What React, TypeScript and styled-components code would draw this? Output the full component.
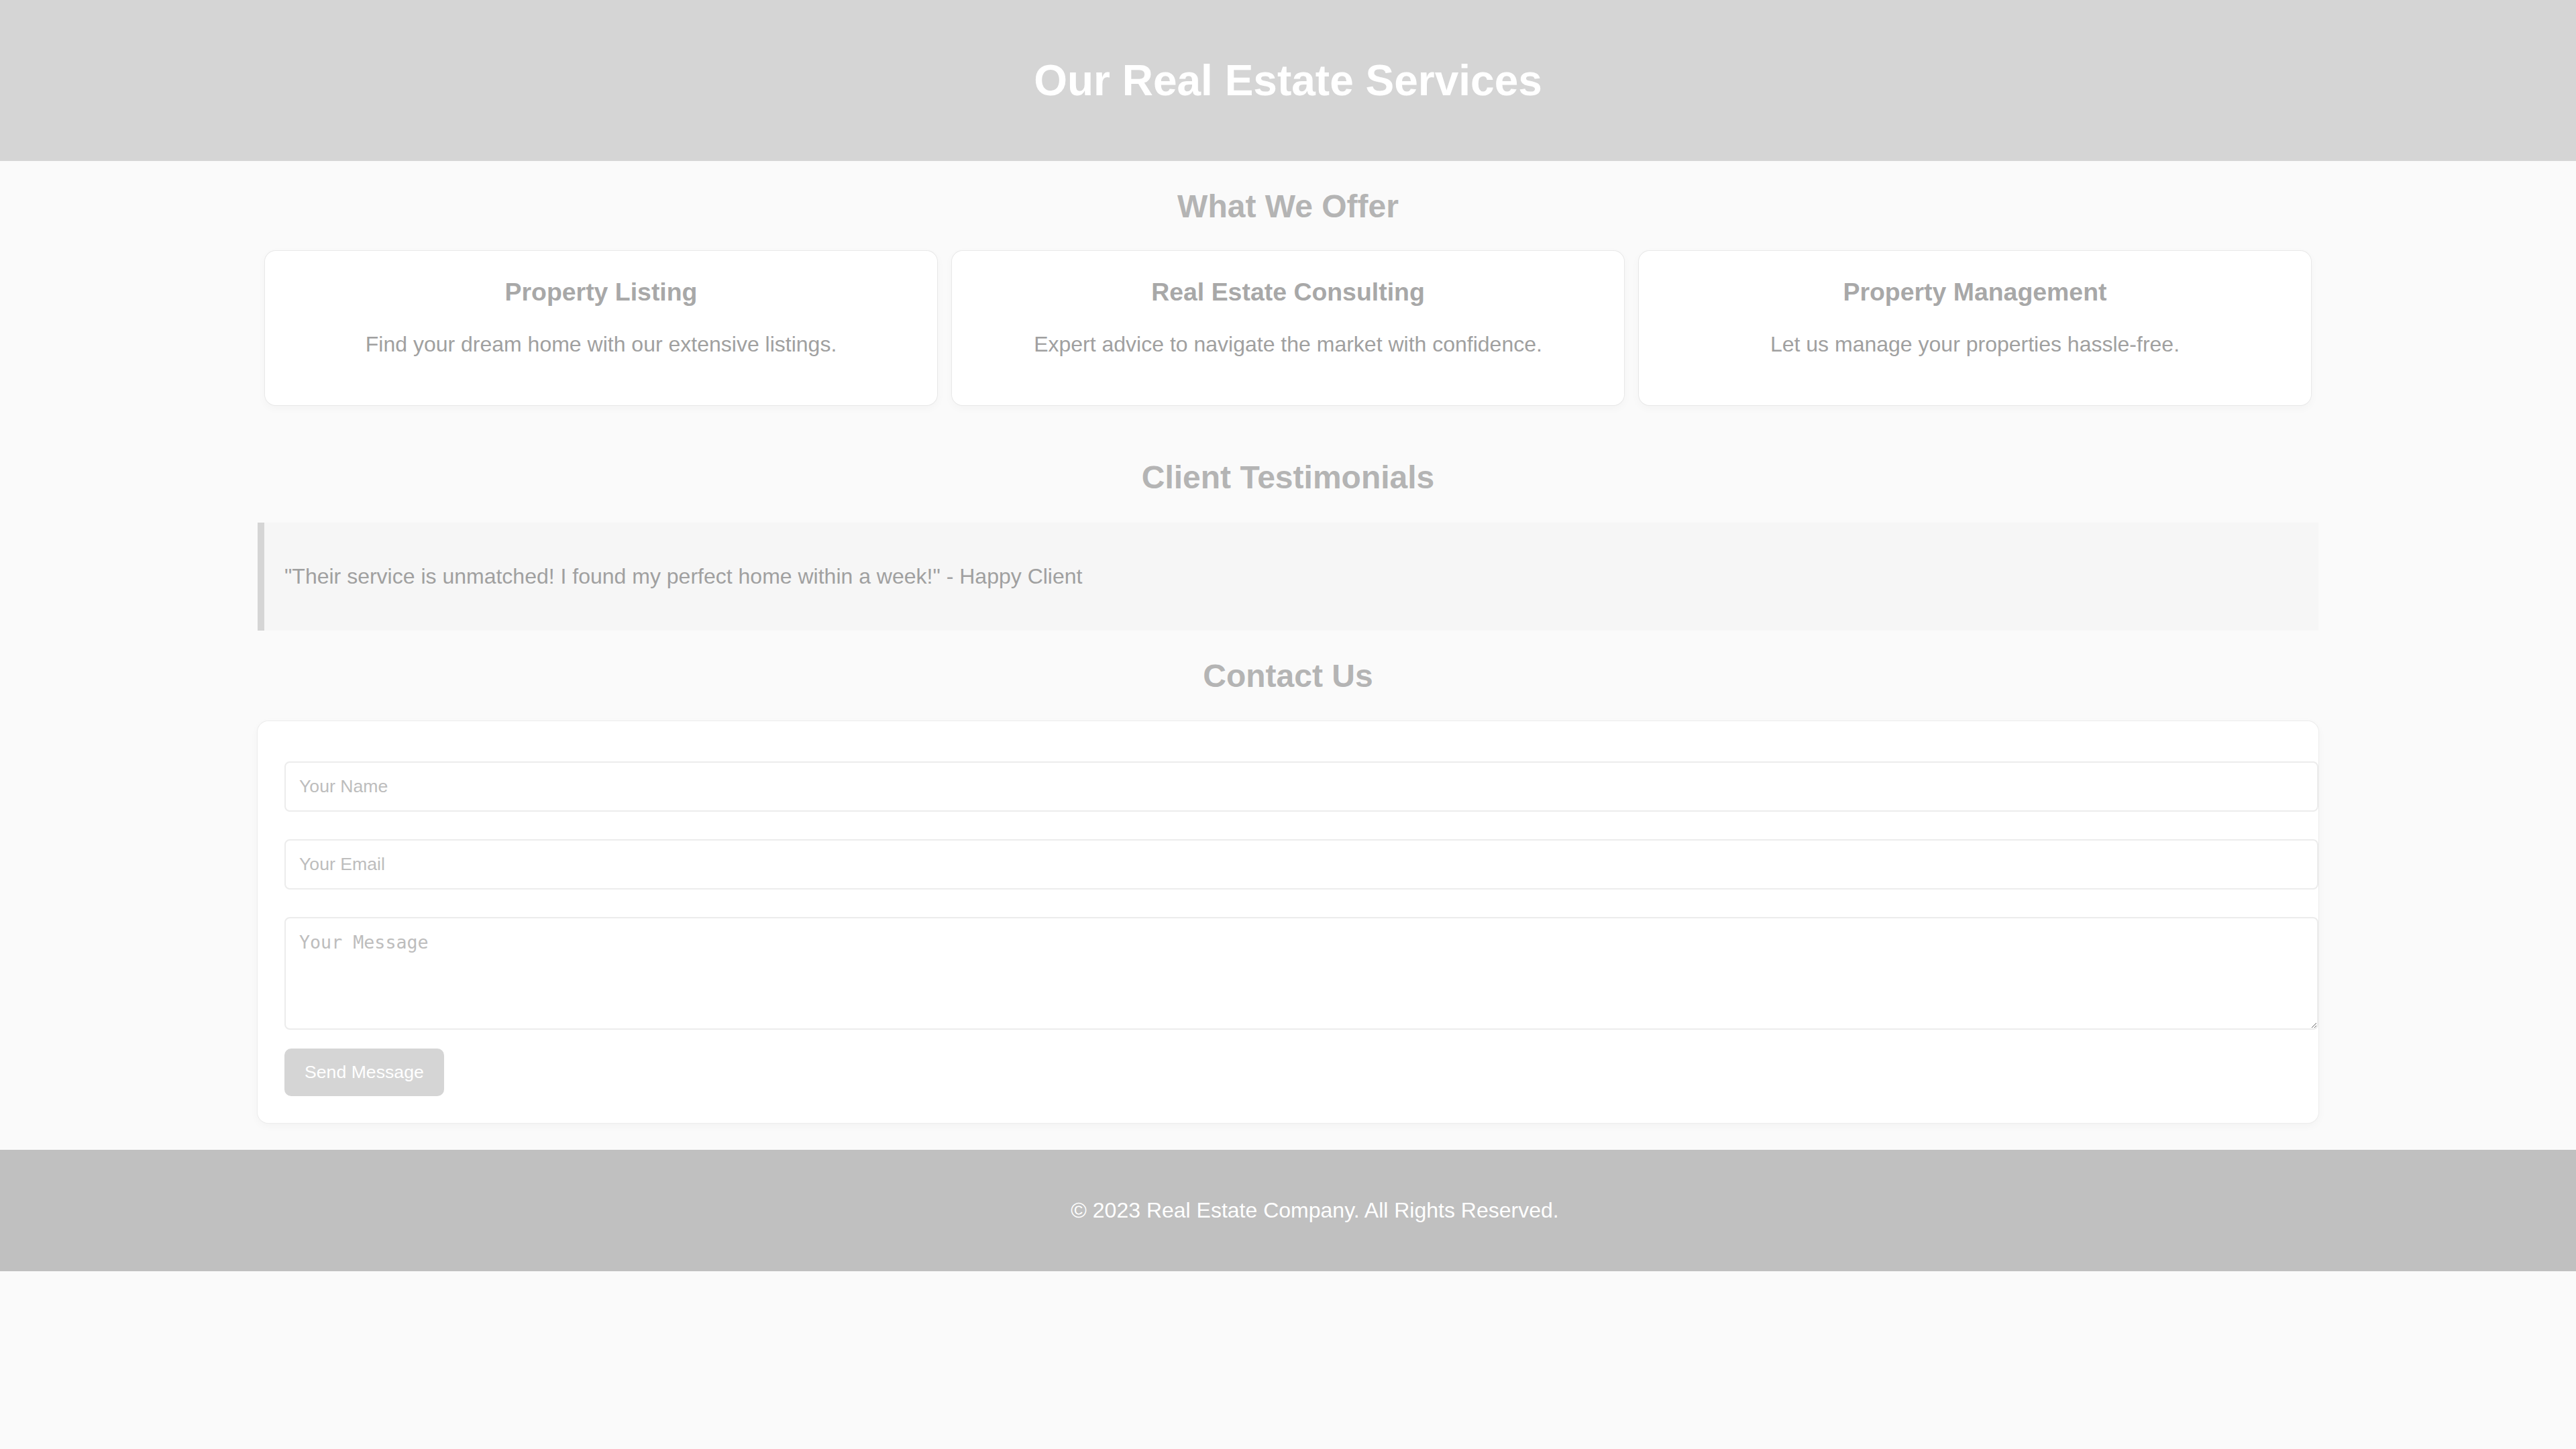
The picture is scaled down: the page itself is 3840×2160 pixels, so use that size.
import React from "react";
import styled, { createGlobalStyle } from "styled-components";

const GlobalStyle = createGlobalStyle`
  html, body {
    margin: 0;
    padding: 0;
    background: #fafafa;
  }
  body {
    font-family: "Liberation Sans", Arial, Helvetica, sans-serif;
    font-size: 32px;
    color: #9a9a9a;
  }
`;

const Header = styled.header`
  background: #d5d5d5;
  color: #ffffff;
  padding: 40px 0;
  text-align: center;
`;

const Title = styled.h1`
  margin: 42.88px 0;
  font-size: 64px;
  font-weight: 700;
  line-height: normal;
  color: #ffffff;
`;

const Main = styled.main`
  width: 80%;
  margin: 0 auto;
`;

const Section = styled.section`
  margin: 0 0 40px;
`;

const SectionTitle = styled.h2`
  margin: 39.84px 0;
  font-size: 48px;
  font-weight: 700;
  line-height: normal;
  text-align: center;
  color: #b4b4b4;
`;

const CardRow = styled.div`
  display: flex;
  justify-content: space-around;
  align-items: flex-start;
`;

const Card = styled.article`
  width: 30%;
  padding: 40px;
  margin-bottom: 40px;
  background: #ffffff;
  border-radius: 16px;
  box-shadow: 0 0 0 1px #e8e8e8, 0 4px 14px rgba(0, 0, 0, 0.035);
  text-align: center;
`;

const CardTitle = styled.h3`
  margin: 0 0 37.44px;
  font-size: 37.44px;
  font-weight: 700;
  line-height: normal;
  color: #a8a8a8;
`;

const CardText = styled.p`
  margin: 0 0 32px;
  font-size: 32px;
  line-height: normal;
  color: #a0a0a0;
`;

const Quote = styled.blockquote`
  margin: 0;
  padding: 30px;
  background: #f6f6f6;
  border-left: 10px solid #d5d5d5;
`;

const QuoteText = styled.p`
  margin: 32px 0;
  font-size: 32px;
  line-height: normal;
  color: #a0a0a0;
`;

const Form = styled.form`
  display: flex;
  flex-direction: column;
  align-items: flex-start;
  padding: 60px 40px 40px;
  background: #ffffff;
  border-radius: 16px;
  box-shadow: 0 0 0 1px #ececec, 0 4px 14px rgba(0, 0, 0, 0.035);
`;

const fieldBase = `
  box-sizing: content-box;
  width: calc(100% - 4px);
  padding: 20px;
  border: 2px solid #ececec;
  border-radius: 8px;
  background: #ffffff;
  color: #9a9a9a;
  outline: none;
  &::placeholder {
    color: #bdbdbd;
  }
`;

const TextInput = styled.input<{ $gap: number }>`
  ${fieldBase}
  font-family: "Liberation Sans", Arial, sans-serif;
  font-size: 26.67px;
  line-height: normal;
  margin: 0 0 ${(p) => p.$gap}px;
`;

const MessageArea = styled.textarea`
  ${fieldBase}
  height: 124px;
  margin: 0 0 28px;
  font-family: "DejaVu Sans Mono", "Liberation Mono", monospace;
  font-size: 26.67px;
  resize: both;
`;

const SendButton = styled.button`
  padding: 20px 30px;
  border: none;
  border-radius: 10px;
  background: #d5d5d5;
  color: #ffffff;
  font-family: "Liberation Sans", Arial, sans-serif;
  font-size: 26.67px;
  line-height: normal;
  cursor: pointer;
`;

const Footer = styled.footer`
  background: #c0c0c0;
  color: #ffffff;
  padding: 40px 0 40px 80px;
  text-align: center;
`;

const FooterText = styled.p`
  margin: 32px 0;
  font-size: 32px;
  line-height: normal;
  color: #ffffff;
`;

const services = [
  {
    title: "Property Listing",
    text: "Find your dream home with our extensive listings.",
  },
  {
    title: "Real Estate Consulting",
    text: "Expert advice to navigate the market with confidence.",
  },
  {
    title: "Property Management",
    text: "Let us manage your properties hassle-free.",
  },
];

export default function App() {
  return (
    <>
      <GlobalStyle />
      <Header>
        <Title>Our Real Estate Services</Title>
      </Header>
      <Main>
        <Section>
          <SectionTitle>What We Offer</SectionTitle>
          <CardRow>
            {services.map((s) => (
              <Card key={s.title}>
                <CardTitle>{s.title}</CardTitle>
                <CardText>{s.text}</CardText>
              </Card>
            ))}
          </CardRow>
        </Section>
        <Section>
          <SectionTitle>Client Testimonials</SectionTitle>
          <Quote>
            <QuoteText>
              "Their service is unmatched! I found my perfect home within a week!" - Happy Client
            </QuoteText>
          </Quote>
        </Section>
        <Section>
          <SectionTitle>Contact Us</SectionTitle>
          <Form onSubmit={(e) => e.preventDefault()}>
            <TextInput type="text" placeholder="Your Name" $gap={41} />
            <TextInput type="email" placeholder="Your Email" $gap={41} />
            <MessageArea placeholder="Your Message" />
            <SendButton type="submit">Send Message</SendButton>
          </Form>
        </Section>
      </Main>
      <Footer>
        <FooterText>© 2023 Real Estate Company. All Rights Reserved.</FooterText>
      </Footer>
    </>
  );
}
